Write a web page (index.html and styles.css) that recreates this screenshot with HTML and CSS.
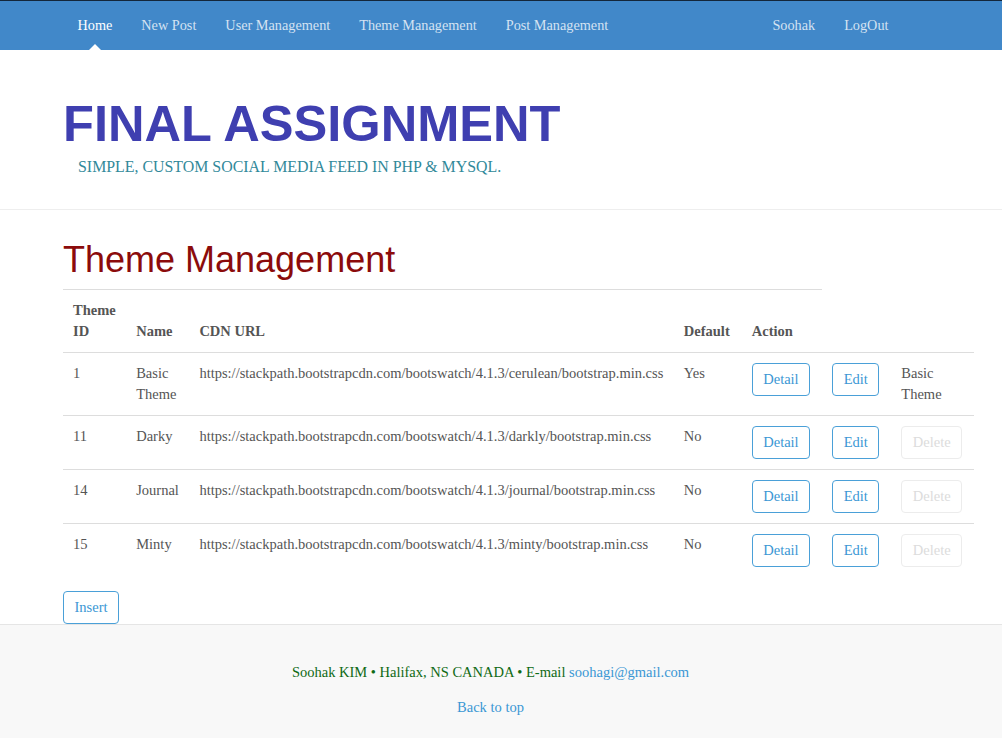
FILE: index.html
```
<!DOCTYPE html>
<html lang="en">
<head>
<meta charset="utf-8">
<title>Theme Management</title>
<link rel="stylesheet" href="styles.css">
</head>
<body>
<nav class="navbar">
  <div class="container nav-inner">
    <ul class="nav-list">
      <li class="nav-item active"><a href="#">Home</a></li>
      <li class="nav-item"><a href="#">New Post</a></li>
      <li class="nav-item"><a href="#">User Management</a></li>
      <li class="nav-item"><a href="#">Theme Management</a></li>
      <li class="nav-item"><a href="#">Post Management</a></li>
    </ul>
    <ul class="nav-list nav-right">
      <li class="nav-item"><a href="#">Soohak</a></li>
      <li class="nav-item"><a href="#">LogOut</a></li>
    </ul>
  </div>
</nav>

<header class="masthead">
  <div class="container">
    <h1 class="site-title">FINAL ASSIGNMENT</h1>
    <p class="site-sub">SIMPLE, CUSTOM SOCIAL MEDIA FEED IN PHP &amp; MYSQL.</p>
  </div>
</header>

<main class="container main">
  <h2 class="page-title">Theme Management</h2>
  <table class="table">
    <thead>
      <tr>
        <th>Theme ID</th>
        <th>Name</th>
        <th>CDN URL</th>
        <th>Default</th>
        <th>Action</th>
      </tr>
    </thead>
    <tbody>
      <tr>
        <td>1</td>
        <td>Basic Theme</td>
        <td>https://stackpath.bootstrapcdn.com/bootswatch/4.1.3/cerulean/bootstrap.min.css</td>
        <td>Yes</td>
        <td><a class="btn" href="#">Detail</a></td>
        <td><a class="btn" href="#">Edit</a></td>
        <td>Basic Theme</td>
      </tr>
      <tr>
        <td>11</td>
        <td>Darky</td>
        <td>https://stackpath.bootstrapcdn.com/bootswatch/4.1.3/darkly/bootstrap.min.css</td>
        <td>No</td>
        <td><a class="btn" href="#">Detail</a></td>
        <td><a class="btn" href="#">Edit</a></td>
        <td><span class="btn btn-disabled">Delete</span></td>
      </tr>
      <tr>
        <td>14</td>
        <td>Journal</td>
        <td>https://stackpath.bootstrapcdn.com/bootswatch/4.1.3/journal/bootstrap.min.css</td>
        <td>No</td>
        <td><a class="btn" href="#">Detail</a></td>
        <td><a class="btn" href="#">Edit</a></td>
        <td><span class="btn btn-disabled">Delete</span></td>
      </tr>
      <tr>
        <td>15</td>
        <td>Minty</td>
        <td>https://stackpath.bootstrapcdn.com/bootswatch/4.1.3/minty/bootstrap.min.css</td>
        <td>No</td>
        <td><a class="btn" href="#">Detail</a></td>
        <td><a class="btn" href="#">Edit</a></td>
        <td><span class="btn btn-disabled">Delete</span></td>
      </tr>
    </tbody>
  </table>
  <a class="btn btn-insert" href="#">Insert</a>
</main>

<footer class="footer">
  <div class="footer-inner">
    <p class="footer-line">Soohak KIM &bull; Halifax, NS CANADA &bull; E-mail <a href="#">soohagi@gmail.com</a></p>
    <p class="footer-line"><a href="#">Back to top</a></p>
  </div>
</footer>
</body>
</html>
```

FILE: styles.css
```
* { box-sizing: border-box; }

html, body {
  margin: 0;
  padding: 0;
}

body {
  font-family: "Liberation Serif", "Times New Roman", serif;
  font-size: 14.5px;
  line-height: 21px;
  color: #555;
  background: #fff;
}

a { text-decoration: none; }

.container {
  width: 876px;
  margin: 0 auto;
}

/* NAVBAR */
.navbar {
  height: 50px;
  background: #4188c9;
  border-top: 1px solid #13263a;
}

.nav-inner {
  display: flex;
  justify-content: space-between;
  height: 49px;
}

.nav-list {
  display: flex;
  list-style: none;
  margin: 0;
  padding: 0;
}

.nav-right {
  margin-right: 36px;
}

.nav-item {
  position: relative;
  display: flex;
  align-items: flex-start;
}

.nav-item a {
  display: block;
  padding: 1px 14.5px 0;
  font-size: 14.25px;
  line-height: 47px;
  color: rgba(255, 255, 255, 0.78);
}

.nav-item.active a {
  color: #fff;
}

.nav-item.active::after {
  content: "";
  position: absolute;
  left: 50%;
  bottom: 0;
  margin-left: -6px;
  border-left: 6px solid transparent;
  border-right: 6px solid transparent;
  border-bottom: 6px solid #fff;
}

/* HEADER */
.masthead {
  padding: 46px 0 32px;
  border-bottom: 1px solid #eee;
}

.site-title {
  margin: 0;
  font-family: "Liberation Sans", Arial, sans-serif;
  font-weight: bold;
  font-size: 50.6px;
  line-height: 56px;
  color: #3f3fb0;
}

.site-sub {
  margin: 4px 0 0 15px;
  font-size: 15.9px;
  line-height: 21px;
  color: #31899a;
}

/* MAIN */
.main {
  padding-top: 30px;
}

.page-title {
  margin: 0 0 9px;
  font-family: "Liberation Sans", Arial, sans-serif;
  font-weight: normal;
  font-size: 36px;
  line-height: 40px;
  color: #8b0b0b;
}

.table {
  width: 100%;
  border-collapse: collapse;
  border-spacing: 0;
}

.table th,
.table td {
  padding: 10px 10.5px 10px 10px;
  text-align: left;
  vertical-align: top;
  line-height: 21px;
}

.table th:nth-child(n+4),
.table td:nth-child(n+4) {
  padding-right: 12px;
}

.table th {
  vertical-align: bottom;
  font-weight: bold;
  border-top: 1px solid #ddd;
}

.table td {
  border-top: 1px solid #ddd;
}

.btn {
  display: inline-block;
  padding: 5px 10.5px;
  border: 1px solid #4aa0d8;
  border-radius: 4px;
  color: #3a97d4;
  line-height: 21px;
  white-space: nowrap;
  background: #fff;
}

.btn-disabled {
  border-color: #ececec;
  color: #dcdcdc;
}

.btn-insert {
  margin-top: 14px;
  display: inline-block;
  vertical-align: top;
}

/* FOOTER */
.footer {
  background: #f8f8f8;
  border-top: 1px solid #e5e5e5;
  padding: 37px 0 20px;
}

.footer-inner {
  text-align: center;
  padding-right: 21px;
}

.footer-line {
  margin: 0 0 14px;
  line-height: 21px;
  color: #0f6a14;
}

.footer-line a {
  color: #3a97d4;
}
```
